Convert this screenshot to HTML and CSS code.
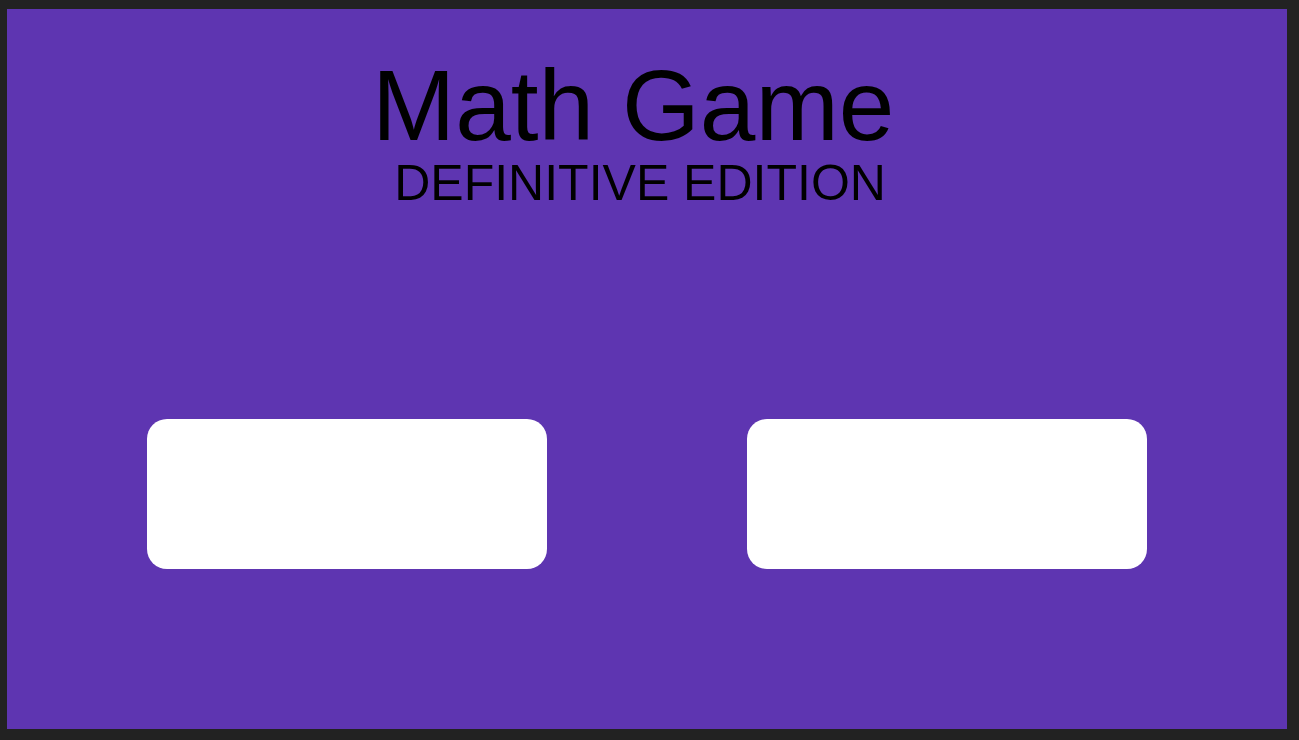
FILE: index.html
```html
<!DOCTYPE html>
<html>
<head>
<meta charset="utf-8">
<title>Math Game</title>
<link rel="stylesheet" href="styles.css">
</head>
<body>
<div class="screen">
  <h1 class="title">Math Game</h1>
  <h2 class="subtitle">DEFINITIVE EDITION</h2>
  <div class="buttons">
    <button class="btn" type="button"></button>
    <button class="btn" type="button"></button>
  </div>
</div>
</body>
</html>
```
FILE: styles.css
```css
html, body {
  margin: 0;
  padding: 0;
  background: #222222;
  height: 100%;
  overflow: hidden;
}
body {
  font-family: "Liberation Sans", Arial, sans-serif;
}
.screen {
  box-sizing: border-box;
  width: 1280px;
  height: 720px;
  margin: 9px 0 0 7px;
  background: #5e35b1;
  padding-top: 46px;
  display: flex;
  flex-direction: column;
  align-items: center;
}
.title {
  margin: 0;
  font-size: 100px;
  font-weight: normal;
  line-height: 1;
  color: #000;
  padding-right: 0.278em;
}
.subtitle {
  margin: 3px 0 0;
  font-size: 50px;
  font-weight: normal;
  line-height: 1;
  color: #000;
  padding-right: 0.278em;
}
.buttons {
  align-self: stretch;
  display: flex;
  justify-content: space-between;
  padding: 0 140px;
  margin-top: 211px;
}
.btn {
  width: 400px;
  height: 150px;
  border: none;
  border-radius: 20px;
  background: #ffffff;
  padding: 0;
}
```
